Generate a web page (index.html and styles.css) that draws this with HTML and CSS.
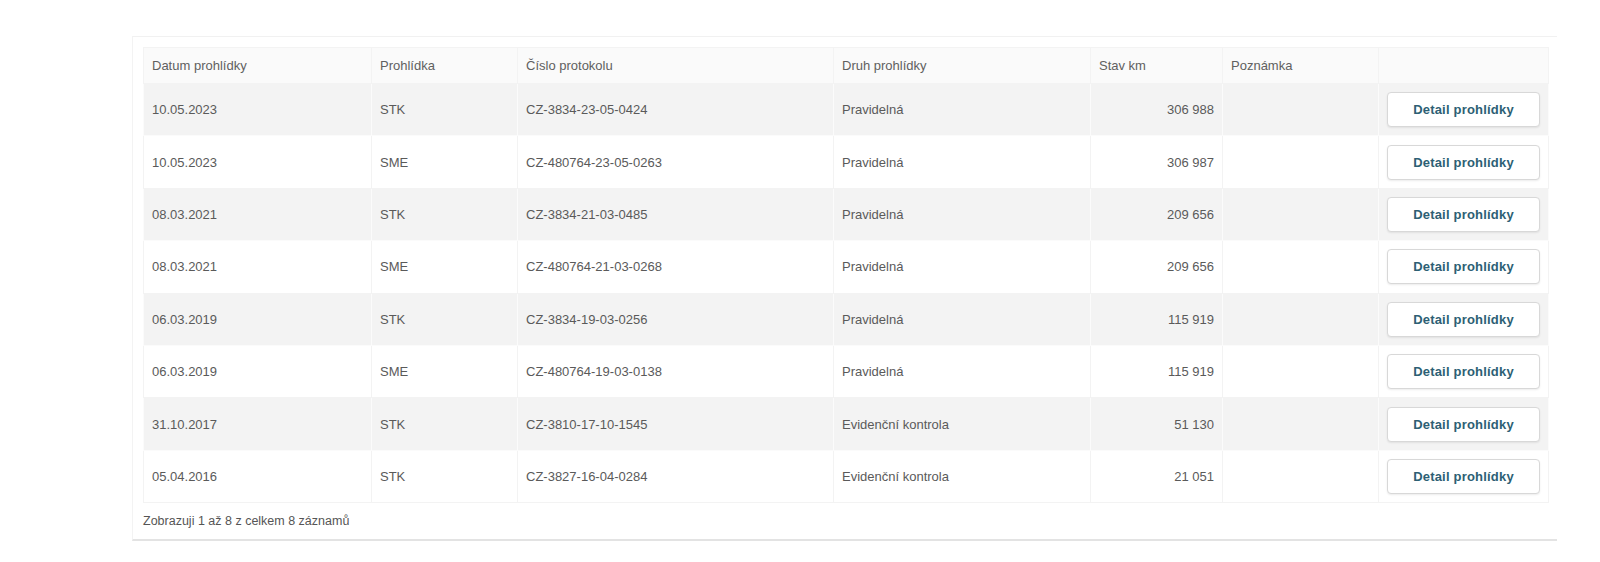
FILE: index.html
```html
<!DOCTYPE html>
<html lang="cs">
<head>
<meta charset="utf-8">
<title>Prohlídky</title>
<link rel="stylesheet" href="styles.css">
</head>
<body>
<div class="panel">
  <table class="grid">
    <colgroup>
      <col class="c-date"><col class="c-type"><col class="c-proto"><col class="c-kind"><col class="c-km"><col class="c-note"><col class="c-btn">
    </colgroup>
    <thead>
      <tr><th>Datum prohlídky</th><th>Prohlídka</th><th>Číslo protokolu</th><th>Druh prohlídky</th><th>Stav km</th><th>Poznámka</th><th></th></tr>
    </thead>
    <tbody>
      <tr><td>10.05.2023</td><td>STK</td><td>CZ-3834-23-05-0424</td><td>Pravidelná</td><td class="num">306 988</td><td></td><td><button class="btn">Detail prohlídky</button></td></tr>
      <tr><td>10.05.2023</td><td>SME</td><td>CZ-480764-23-05-0263</td><td>Pravidelná</td><td class="num">306 987</td><td></td><td><button class="btn">Detail prohlídky</button></td></tr>
      <tr><td>08.03.2021</td><td>STK</td><td>CZ-3834-21-03-0485</td><td>Pravidelná</td><td class="num">209 656</td><td></td><td><button class="btn">Detail prohlídky</button></td></tr>
      <tr><td>08.03.2021</td><td>SME</td><td>CZ-480764-21-03-0268</td><td>Pravidelná</td><td class="num">209 656</td><td></td><td><button class="btn">Detail prohlídky</button></td></tr>
      <tr><td>06.03.2019</td><td>STK</td><td>CZ-3834-19-03-0256</td><td>Pravidelná</td><td class="num">115 919</td><td></td><td><button class="btn">Detail prohlídky</button></td></tr>
      <tr><td>06.03.2019</td><td>SME</td><td>CZ-480764-19-03-0138</td><td>Pravidelná</td><td class="num">115 919</td><td></td><td><button class="btn">Detail prohlídky</button></td></tr>
      <tr><td>31.10.2017</td><td>STK</td><td>CZ-3810-17-10-1545</td><td>Evidenční kontrola</td><td class="num">51 130</td><td></td><td><button class="btn">Detail prohlídky</button></td></tr>
      <tr><td>05.04.2016</td><td>STK</td><td>CZ-3827-16-04-0284</td><td>Evidenční kontrola</td><td class="num">21 051</td><td></td><td><button class="btn">Detail prohlídky</button></td></tr>
    </tbody>
  </table>
  <div class="info">Zobrazuji 1 až 8 z celkem 8 záznamů</div>
</div>
</body>
</html>
```

FILE: styles.css
```css
html, body {
  margin: 0;
  padding: 0;
  background: #ffffff;
}
body {
  padding-top: 36px;
  font-family: "Liberation Sans", Arial, sans-serif;
  color: #5a5a5a;
}
.panel {
  box-sizing: border-box;
  margin-left: 132px;
  width: 1425px;
  border-top: 1px solid #f1f1f1;
  border-left: 1px solid #f3f3f3;
  border-bottom: 2px solid #e3e3e3;
  padding: 10px 6px 0 10px;
}
.grid {
  width: 1405px;
  table-layout: fixed;
  border-collapse: collapse;
  font-size: 13px;
}
.c-date { width: 228px; }
.c-type { width: 146px; }
.c-proto { width: 316px; }
.c-kind { width: 257px; }
.c-km { width: 132px; }
.c-note { width: 156px; }
.c-btn { width: 170px; }
.grid th, .grid td {
  border: 1px solid #f3f3f3;
  padding: 0 8px;
  text-align: left;
  white-space: nowrap;
}
.grid th {
  height: 35px;
  font-weight: normal;
  color: #606060;
  background: #fafafa;
}
.grid tbody tr {
  height: 52.4px;
}
.grid tbody tr:nth-child(odd) td {
  background: #f3f3f3;
  border-color: #fbfbfb;
}
.grid td.num {
  text-align: right;
}
.btn {
  display: block;
  box-sizing: border-box;
  width: 100%;
  height: 35px;
  background: #ffffff;
  border: 1px solid #d8d8d8;
  border-radius: 4px;
  box-shadow: 0 1px 2px rgba(0, 0, 0, 0.08);
  font-family: "Liberation Sans", Arial, sans-serif;
  font-size: 13px;
  font-weight: bold;
  letter-spacing: 0.2px;
  color: #2d5f74;
  padding: 0;
}
.info {
  font-size: 12.5px;
  line-height: 18px;
  padding: 9px 0 9px 0;
  color: #555555;
}
```
